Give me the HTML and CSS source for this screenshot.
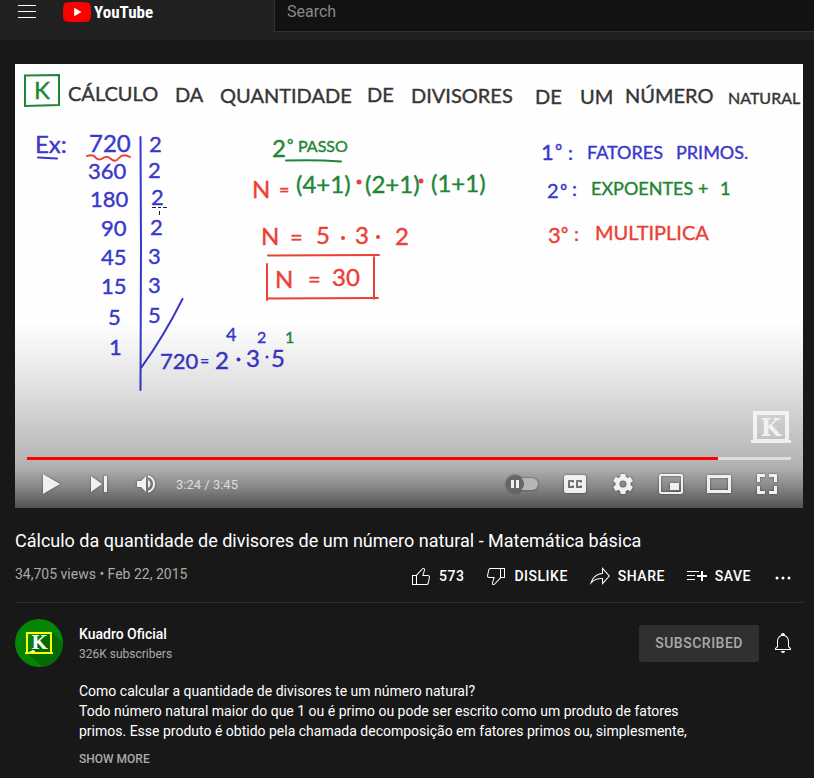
FILE: index.html
```html
<!DOCTYPE html>
<html lang="en">
<head>
<meta charset="utf-8">
<meta name="viewport" content="width=device-width, initial-scale=1">
<title>Cálculo da quantidade de divisores de um número natural - YouTube</title>
<link rel="stylesheet" href="styles.css">
</head>
<body>
<header class="masthead">
  <button class="icon-button" type="button" aria-label="Guide">
    <svg class="icon" viewBox="0 0 24 24"><path d="M3 5h18v1H3zM3 11h18v1H3zM3 17h18v1H3z"/></svg>
  </button>
  <a class="logo" href="#" aria-label="YouTube Home">
    <svg class="logo-mark" viewBox="0 0 28 20"><path fill="#f00" d="M27.4 3.1A3.5 3.5 0 0 0 25 .6C22.800 0 14 0 14 0S5.200 0 3 .6A3.500 3.500 0 0 0 .6 3.100C0 5.300 0 10 0 10s0 4.700.6 6.900A3.500 3.500 0 0 0 3 19.400C5.200 20 14 20 14 20s8.800 0 11-.6a3.500 3.500 0 0 0 2.400-2.500C28 14.700 28 10 28 10s0-4.700-.6-6.900z"/><path fill="#fff" d="M11.200 14.300 18.500 10l-7.300-4.300z"/></svg>
    <span class="logo-name">YouTube</span>
  </a>
  <form class="search"><input class="search-input" type="text" placeholder="Search" aria-label="Search"></form>
</header>

<main class="watch">
  <section class="player" aria-label="Video player">
    <svg class="frame" viewBox="15 64 788 444" role="img" aria-label="Whiteboard lesson">
      <rect x="15" y="64" width="788" height="444" fill="#fefefe"/>
      <g class="ink black">
        <text class="s20" x="68" y="101">CÁLCULO</text>
        <text class="s20" x="175" y="102">DA</text>
        <text class="s20" x="220" y="103">QUANTIDADE</text>
        <text class="s20" x="367" y="102">DE</text>
        <text class="s20" x="411" y="103">DIVISORES</text>
        <text class="s20" x="535" y="104">DE</text>
        <text class="s20" x="580" y="104">UM</text>
        <text class="s20" x="625" y="103">NÚMERO</text>
        <text class="s16" x="728" y="104">NATURAL</text>
      </g>
      <g class="ink green">
        <path class="stroke" d="M25 75.500 59 75v30l-34 1z"/>
        <text class="s24" x="34" y="99">K</text>
        <text class="s24" x="272" y="157">2</text>
        <text class="s16" x="287" y="151">º</text>
        <text class="s16" x="298" y="152">PASSO</text>
        <path class="stroke" d="M286 160.500q30-1 55 1"/>
        <text class="s24" x="296" y="193">(4+1)</text>
        <text class="s24" x="365" y="193">(2+1)</text>
        <text class="s24" x="431" y="192">(1+1)</text>
        <text class="s16" x="285" y="343">1</text>
        <text class="s18" x="591" y="195">EXPOENTES</text>
        <text class="s18" x="698" y="195">+</text>
        <text class="s18" x="720" y="195">1</text>
      </g>
      <g class="ink blue">
        <text class="s24" x="35" y="153">Ex:</text>
        <path class="stroke" d="M38 157.500l19 1"/>
        <text class="s24" x="89" y="152">720</text><text class="s22" x="149" y="152">2</text>
        <text class="s22" x="88" y="179">360</text><text class="s22" x="148" y="178">2</text>
        <text class="s22" x="90" y="207">180</text><text class="s22" x="151" y="205">2</text>
        <text class="s22" x="101" y="236">90</text><text class="s22" x="150" y="235">2</text>
        <text class="s22" x="101" y="265">45</text><text class="s22" x="148" y="264">3</text>
        <text class="s22" x="101" y="294">15</text><text class="s22" x="148" y="293">3</text>
        <text class="s22" x="108" y="325">5</text><text class="s22" x="148" y="323">5</text>
        <text class="s22" x="109" y="355">1</text>
        <path class="stroke" d="M140.500 137 141 247 140.500 390M182.500 299Q164 336 141 368"/>
        <text class="s22" x="160" y="369">720</text>
        <text class="s16" x="200" y="367">=</text>
        <text class="s24" x="215" y="369">2</text>
        <circle cx="238.500" cy="359.500" r="2"/>
        <text class="s24" x="246" y="367">3</text>
        <circle cx="267" cy="357" r="1.500"/>
        <text class="s24" x="271" y="367">5</text>
        <text class="s18" x="226" y="341">4</text>
        <text class="s16" x="257" y="343">2</text>
        <text class="s22" x="541" y="160">1</text><text class="s18" x="555" y="157">º</text><text class="s20" x="568" y="160">:</text>
        <text class="s18" x="587" y="159">FATORES</text>
        <text class="s18" x="676" y="159">PRIMOS.</text>
        <text class="s20" x="547" y="198">2</text><text class="s18" x="560" y="197">º</text><text class="s20" x="572" y="196">:</text>
      </g>
      <g class="ink red">
        <path class="stroke" d="M87 156q6-2 9 2 3 3 7 0t8 1 8-1 11-1"/>
        <text class="s24" x="252" y="198">N</text><text class="s18" x="279" y="196">=</text>
        <circle cx="359" cy="182" r="2.500"/><circle cx="421" cy="181" r="2.500"/>
        <text class="s24" x="261" y="245">N</text><text class="s22" x="290" y="245">=</text><text class="s24" x="316" y="244">5</text>
        <circle cx="343" cy="238" r="2"/><text class="s24" x="355" y="244">3</text>
        <circle cx="378" cy="237" r="2"/><text class="s24" x="395" y="245">2</text>
        <path class="stroke" d="M268 255.500 379 255M267 264v36M268 298.500 378 298M374 257v42"/>
        <text class="s24" x="275" y="288">N</text><text class="s22" x="308" y="287">=</text><text class="s24" x="332" y="286">30</text>
        <text class="s22" x="548" y="243">3</text><text class="s18" x="561" y="240">º</text><text class="s20" x="574" y="241">:</text>
        <text class="s20" x="595" y="240">MULTIPLICA</text>
      </g>
      <path class="cursor" d="M152 207.500h4M158 207.500h3M163 207.500h4M159.500 211v4"/>
    </svg>
    <div class="shade">
      <svg class="watermark" viewBox="0 0 40 34"><path fill-rule="evenodd" d="M2 1h36v29h2v3H0v-3h2zM6 5v24h28V5z"/><text x="20" y="26">K</text></svg>
      <div class="progress" role="progressbar" aria-label="Progress" aria-valuenow="204" aria-valuemax="225"><div class="played"></div></div>
      <div class="controls">
        <button class="control" type="button" aria-label="Play"><svg class="icon" viewBox="0 0 24 24"><path d="M4 2v20l17-10z"/></svg></button>
        <button class="control" type="button" aria-label="Next"><svg class="icon" viewBox="0 0 24 24"><path d="M4 4v16l11-8zM17 4h3v16h-3z"/></svg></button>
        <button class="control" type="button" aria-label="Mute"><svg class="icon" viewBox="0 0 24 24"><path d="M2 9v6h4l5 5V4L6 9zm13.500 3A4.500 4.500 0 0 0 13 8v8a4.500 4.500 0 0 0 2.500-4zM13 3.200v2.100a7 7 0 0 1 0 13.400v2.100a9 9 0 0 0 0-17.600z"/></svg></button>
        <span class="time">3:24 / 3:45</span>
        <button class="control autoplay" type="button" aria-label="Autoplay"><svg class="autoplay-icon" viewBox="0 0 36 24"><rect class="track" x="8" y="6" width="26" height="12" rx="6"/><circle class="knob" cx="11" cy="12" r="9"/><path d="M7 8h3v8H7zM12 8h3v8h-3z"/></svg></button>
        <button class="control" type="button" aria-label="Subtitles"><svg class="icon" viewBox="0 0 24 24"><path fill-rule="evenodd" d="M3 3h18a2 2 0 0 1 2 2v14a2 2 0 0 1-2 2H3a2 2 0 0 1-2-2V5a2 2 0 0 1 2-2zM6 8a1 1 0 0 0-1 1v6a1 1 0 0 0 1 1h4a1 1 0 0 0 1-1v-1.500H9v.5H7v-4h2v.5h2V9a1 1 0 0 0-1-1zM14 8a1 1 0 0 0-1 1v6a1 1 0 0 0 1 1h4a1 1 0 0 0 1-1v-1.500h-2v.5h-2v-4h2v.5h2V9a1 1 0 0 0-1-1z"/></svg></button>
        <button class="control" type="button" aria-label="Settings"><svg class="icon" viewBox="0 0 24 24"><path d="M19.430 12.980c.04-.32.07-.64.07-.98s-.03-.66-.07-.98l2.110-1.650c.19-.15.24-.42.12-.64l-2-3.460c-.12-.22-.39-.3-.61-.22l-2.490 1c-.52-.4-1.080-.73-1.690-.98l-.38-2.650A.488.488 0 0 0 14 2h-4c-.25 0-.46.18-.49.42l-.38 2.650c-.61.25-1.170.59-1.690.98l-2.490-1c-.23-.09-.49 0-.61.22l-2 3.460c-.13.22-.07.49.12.64l2.110 1.650c-.04.32-.07.65-.07.98s.03.66.07.98l-2.110 1.650c-.19.15-.24.42-.12.64l2 3.460c.12.22.39.3.61.22l2.490-1c.52.4 1.080.73 1.690.98l.38 2.650c.03.24.24.42.49.42h4c.25 0 .46-.18.49-.42l.38-2.650c.61-.25 1.170-.59 1.690-.98l2.490 1c.23.09.49 0 .61-.22l2-3.460c.12-.22.07-.49-.12-.64zM12 15.500a3.500 3.500 0 1 1 0-7 3.500 3.500 0 0 1 0 7z"/></svg></button>
        <button class="control" type="button" aria-label="Miniplayer"><svg class="icon" viewBox="0 0 24 24"><path fill-rule="evenodd" d="M2 2h20a2 2 0 0 1 2 2v16a2 2 0 0 1-2 2H2a2 2 0 0 1-2-2V4a2 2 0 0 1 2-2zm0 3v14a1 1 0 0 0 1 1h18a1 1 0 0 0 1-1V5a1 1 0 0 0-1-1H3a1 1 0 0 0-1 1zM11 11h9v7h-9z"/></svg></button>
        <button class="control" type="button" aria-label="Theater mode"><svg class="icon" viewBox="0 0 24 24"><path fill-rule="evenodd" d="M0 3h24v18H0zM3 6v12h18V6z"/></svg></button>
        <button class="control" type="button" aria-label="Full screen"><svg class="icon" viewBox="0 0 24 24"><path d="M2 2h8v3H5v5H2zM14 2h8v8h-3V5h-5zM2 14h3v5h5v3H2zM19 14h3v8h-8v-3h5z"/></svg></button>
      </div>
    </div>
  </section>

  <h1 class="title">Cálculo da quantidade de divisores de um número natural - Matemática básica</h1>
  <div class="info">
    <span class="views">34,705 views • Feb 22, 2015</span>
    <div class="actions">
      <button class="action" type="button"><svg class="icon" viewBox="0 0 24 24"><path d="M18.770,11h-4.230l1.520-4.940C16.380,5.030,15.540,4,14.380,4c-0.580,0-1.140,0.240-1.520,0.650L7,11H3v10h4h1h9.430c1.060,0,1.980-0.670,2.190-1.610l1.340-6C21.230,12.150,20.180,11,18.770,11z M7,20H4v-8h3V20z M19.980,13.170l-1.340,6C18.540,19.650,18.030,20,17.430,20H8v-8.610l5.600-6.060C13.790,5.120,14.080,5,14.380,5c0.260,0,0.500,0.110,0.630,0.300c0.070,0.100,0.150,0.260,0.090,0.470l-1.520,4.940L13.180,12h1.350h4.230c0.410,0,0.800,0.170,1.030,0.460C19.920,12.610,20.050,12.860,19.980,13.170z"/></svg>573</button>
      <button class="action" type="button"><svg class="icon" viewBox="0 0 24 24"><path d="M17,4h-1H6.570C5.500,4,4.590,4.670,4.380,5.610l-1.340,6C2.770,12.850,3.820,14,5.230,14h4.230l-1.520,4.940C7.620,19.970,8.460,21,9.620,21c0.580,0,1.140-0.240,1.520-0.650L17,14h4V4H17z M10.400,19.670C10.210,19.880,9.920,20,9.620,20c-0.260,0-0.500-0.110-0.630-0.300c-0.070-0.100-0.150-0.260-0.090-0.470l1.520-4.940l0.400-1.290H9.460H5.230c-0.410,0-0.800-0.170-1.030-0.460c-0.120-0.150-0.250-0.400-0.180-0.720l1.340-6C5.460,5.350,5.970,5,6.570,5H16v8.610L10.400,19.670z M20,13h-3V5h3V13z"/></svg>DISLIKE</button>
      <button class="action" type="button"><svg class="icon" viewBox="0 0 24 24"><path d="M15,5.630L20.660,12L15,18.370V15v-1h-1c-3.960,0-7.140,1-9.750,3.090c1.840-4.070,5.110-6.400,9.890-7.100L15,9.860V9V5.630 M14,3v6C6.220,10.130,3.110,15.330,2,21c2.780-3.970,6.440-6,12-6v6l8-9L14,3L14,3z"/></svg>SHARE</button>
      <button class="action" type="button"><svg class="icon" viewBox="0 0 24 24"><path d="M22,13h-4v4h-2v-4h-4v-2h4V7h2v4h4V13z M14,7H2v1h12V7z M2,12h8v-1H2V12z M2,16h8v-1H2V16z"/></svg>SAVE</button>
      <button class="action" type="button" aria-label="More actions"><svg class="icon" viewBox="0 0 24 24"><circle cx="6" cy="14" r="1.500"/><circle cx="12" cy="14" r="1.500"/><circle cx="18" cy="14" r="1.500"/></svg></button>
    </div>
  </div>

  <section class="channel">
    <div class="owner">
      <svg class="avatar" viewBox="0 0 48 48" role="img" aria-label="Kuadro Oficial"><circle cx="24" cy="24" r="24" fill="#048504"/><path fill="#046a04" d="M37 13 48 24A24 24 0 0 1 28 48L12 34z"/><path fill="none" stroke="#ff0" stroke-width="2" d="M12 34V14h24v20M10 34h28"/><text x="24" y="30">K</text><path fill="#fff" d="M14 33h6v-1l-2-1z"/></svg>
      <div class="names">
        <a class="channel-name" href="#">Kuadro Oficial</a>
        <span class="subscribers">326K subscribers</span>
      </div>
      <button class="subscribe" type="button">SUBSCRIBED</button>
      <button class="icon-button" type="button" aria-label="Notifications"><svg class="icon" viewBox="0 0 24 24"><path d="M10,20h4c0,1.100-0.900,2-2,2S10,21.100,10,20z M20,17.350V19H4v-1.650l2-1.880v-5.150c0-2.920,1.560-5.220,4-5.980V3.960c0-1.420,1.490-2.500,2.990-1.760C13.640,2.520,14,3.230,14,3.960l0,0.390c2.440,0.750,4,3.060,4,5.980v5.150L20,17.350z M19,17.770l-2-1.880v-5.470c0-2.470-1.190-4.360-3.130-5.100c-1.260-0.530-2.640-0.500-3.840,0.030C8.150,6.110,7,7.990,7,10.420v5.470l-2,1.880V18h14V17.770z"/></svg></button>
    </div>
    <div class="description">
      <p class="description-text">Como calcular a quantidade de divisores te um número natural?<br>Todo número natural maior do que 1 ou é primo ou pode ser escrito como um produto de fatores primos. Esse produto é obtido pela chamada decomposição em fatores primos ou, simplesmente,</p>
      <button class="show-more" type="button">SHOW MORE</button>
    </div>
  </section>
</main>
</body>
</html>
```
FILE: styles.css
```css
* {
  box-sizing: border-box;
}

body {
  margin: 0;
  background: #181818;
  color: #fff;
  font-family: Roboto, Arial, sans-serif;
  font-size: 14px;
}

button {
  display: flex;
  align-items: center;
  justify-content: center;
  padding: 0;
  border: 0;
  background: none;
  color: inherit;
  font: inherit;
  cursor: pointer;
}

a {
  color: inherit;
  text-decoration: none;
}

svg {
  display: block;
  flex: none;
  fill: currentColor;
}

.icon {
  width: 24px;
  height: 24px;
}

.masthead {
  display: flex;
  align-items: flex-start;
  height: 40px;
  padding-left: 15px;
  background: #212121;
}

.logo {
  display: flex;
  align-items: center;
  gap: 3px;
  width: 211px;
  height: 24px;
  margin-left: 24px;
}

.logo-mark {
  width: 28px;
  height: 20px;
}

.logo-name {
  font: bold 17px "Roboto Condensed", "Liberation Sans Narrow", Roboto, sans-serif;
}

.search {
  flex: 1;
}

.search-input {
  display: block;
  width: 100%;
  height: 32px;
  padding: 0 12px 8px;
  border: solid #303030;
  border-width: 0 0 1px 1px;
  border-radius: 0;
  background: #121212;
  color: #fff;
  font: 16px Roboto, Arial, sans-serif;
}

.search-input::placeholder {
  color: #888;
}

.watch {
  padding: 24px 11px 8px 15px;
}

.player {
  display: grid;
}

.frame,
.shade {
  grid-area: 1 / 1;
}

.frame {
  width: 100%;
  height: auto;
}

.ink {
  font-family: Lato, sans-serif;
  fill: currentColor;
}

.ink text {
  stroke: currentColor;
  stroke-width: 0.4;
}

.black { color: #363636; }
.green { color: #1f8636; }
.blue { color: #3a38cc; }
.red { color: #ec4036; }

.s16 { font-size: 16px; }
.s18 { font-size: 18px; }
.s20 { font-size: 20px; }
.s22 { font-size: 22px; }
.s24 { font-size: 24px; }

.stroke {
  fill: none;
  stroke: currentColor;
  stroke-width: 2;
  stroke-linecap: round;
}

.cursor {
  stroke: #222;
}

.shade {
  display: flex;
  flex-direction: column;
  justify-content: flex-end;
  padding: 0 12px;
  background: linear-gradient(
    transparent 58%,
    rgba(0, 0, 0, 0.05) 65%,
    rgba(0, 0, 0, 0.15) 76%,
    rgba(0, 0, 0, 0.27) 88%,
    rgba(0, 0, 0, 0.31) 91%,
    rgba(0, 0, 0, 0.46) 95%,
    rgba(0, 0, 0, 0.68)
  );
}

.watermark {
  align-self: flex-end;
  width: 40px;
  height: 34px;
  margin-bottom: 13px;
  color: #fff;
  opacity: 0.75;
}

.watermark text,
.avatar text {
  fill: #fff;
  font-family: "DejaVu Serif", serif;
  font-weight: bold;
  text-anchor: middle;
}

.watermark text {
  font-size: 24px;
}

.progress {
  height: 3px;
  background: rgba(255, 255, 255, 0.55);
}

.played {
  width: 90.5%;
  height: 100%;
  background: #f00;
}

.controls {
  display: flex;
  align-items: center;
  height: 48px;
  color: #f0f0f0;
}

.control {
  width: 48px;
  height: 48px;
}

.control svg {
  filter: drop-shadow(0 0 1px rgba(0, 0, 0, 0.5));
}

.autoplay {
  width: 58px;
  margin-left: auto;
}

.autoplay-icon {
  width: 36px;
  height: 24px;
}

.track {
  fill: #b5b5b5;
}

.knob {
  fill: #666;
}

.time {
  padding-left: 5px;
  color: #ddd;
  font-size: 13px;
}

.title {
  margin: 21px 0 0;
  font-size: 18px;
  font-weight: 400;
  line-height: 24px;
}

.info {
  display: flex;
  align-items: flex-start;
  justify-content: space-between;
  height: 50px;
  padding: 11px 8px 0 0;
  border-bottom: 1px solid #303030;
}

.views {
  color: #aaa;
  line-height: 20px;
}

.actions {
  display: flex;
  gap: 20px;
}

.action {
  gap: 6px;
  font-weight: 500;
  letter-spacing: 0.5px;
}

.channel {
  padding-top: 16px;
}

.owner {
  display: flex;
  align-items: center;
  padding-right: 8px;
}

.avatar {
  width: 48px;
  height: 48px;
}

.avatar text {
  font-size: 18px;
}

.names {
  display: flex;
  flex: 1;
  flex-direction: column;
  margin-left: 16px;
}

.channel-name {
  font-weight: 500;
  line-height: 22px;
}

.subscribers {
  color: #aaa;
  font-size: 12px;
  line-height: 18px;
}

.subscribe {
  height: 37px;
  margin-right: 12px;
  padding: 0 16px;
  border-radius: 2px;
  background: #303030;
  color: #aaa;
  font-weight: 500;
  letter-spacing: 0.5px;
}

.description {
  max-width: 679px;
  padding: 14px 0 0 64px;
}

.description-text {
  margin: 0;
  line-height: 20px;
}

.show-more {
  margin-top: 8px;
  color: #aaa;
  font-size: 12px;
  font-weight: 500;
  line-height: 20px;
}
```
